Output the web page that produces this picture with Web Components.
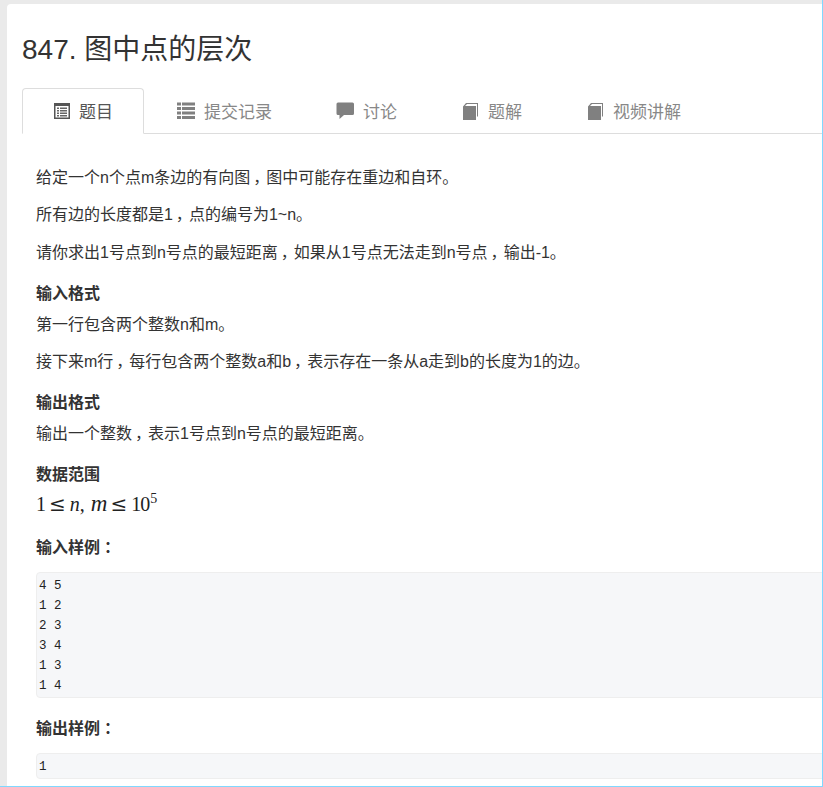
<!DOCTYPE html>
<html lang="zh">
<head>
<meta charset="utf-8">
<title>847. 图中点的层次</title>
<style>
  html, body { margin: 0; height: 787px; overflow: hidden; background: #e6e6e6; }
</style>
</head>
<body>
<problem-page>
  <h-title slot="title">847. 图中点的层次</h-title>
  <tab-bar slot="tabs">
    <tab-item active icon="list-alt">题目</tab-item>
    <tab-item icon="th-list">提交记录</tab-item>
    <tab-item icon="comment">讨论</tab-item>
    <tab-item icon="book">题解</tab-item>
    <tab-item icon="book">视频讲解</tab-item>
  </tab-bar>
  <text-para>给定一个n个点m条边的有向图<wide-mark>，</wide-mark>图中可能存在重边和自环。</text-para>
  <text-para>所有边的长度都是1<wide-mark>，</wide-mark>点的编号为1~n。</text-para>
  <text-para>请你求出1号点到n号点的最短距离<wide-mark>，</wide-mark>如果从1号点无法走到n号点<wide-mark>，</wide-mark>输出-1。</text-para>
  <sub-head>输入格式</sub-head>
  <text-para>第一行包含两个整数n和m。</text-para>
  <text-para>接下来m行<wide-mark>，</wide-mark>每行包含两个整数a和b<wide-mark>，</wide-mark>表示存在一条从a走到b的长度为1的边。</text-para>
  <sub-head>输出格式</sub-head>
  <text-para>输出一个整数<wide-mark>，</wide-mark>表示1号点到n号点的最短距离。</text-para>
  <sub-head>数据范围</sub-head>
  <math-line></math-line>
  <sub-head class="sample">输入样例<wide-mark>：</wide-mark></sub-head>
  <code-block>4 5
1 2
2 3
3 4
1 3
1 4</code-block>
  <sub-head class="sample">输出样例<wide-mark>：</wide-mark></sub-head>
  <code-block>1</code-block>
</problem-page>

<script>
const CJK = `"Liberation Sans", "Noto Sans CJK SC", sans-serif`;

class ProblemPage extends HTMLElement {
  constructor() {
    super();
    this.attachShadow({ mode: "open" });
    this.shadowRoot.innerHTML = /* html */`
    <style>
      :host {
        display: block;
        box-sizing: border-box;
        width: 823px;
        height: 787px;
        padding: 4px 0 0 7px;
        overflow: hidden;
        position: relative;
        font-family: ${CJK};
        color: #333;
      }
      :host::after {
        content: "";
        position: absolute;
        inset: 0;
        border-right: 1px solid #80d8ff;
        border-bottom: 1px solid #80d8ff;
        pointer-events: none;
      }
      .paper { position: absolute; inset: 0; width: 100%; height: 100%; }
      .card {
        position: relative;
        background: #fff;
        border-radius: 4px 0 0 0;
        height: 100%;
        width: 830px;
        box-sizing: border-box;
        padding: 28px 0 0 15px;
      }
      .body { padding: 32.5px 0 0 14px; }
    </style>
    <svg class="paper">
      <filter id="grain">
        <feTurbulence type="fractalNoise" baseFrequency="0.45" numOctaves="2" seed="4"/>
        <feColorMatrix values="0 0 0 0 0.82  0 0 0 0 0.82  0 0 0 0 0.82  0.5 0 0 0 0.55"/>
      </filter>
      <rect width="100%" height="100%" fill="#ececec"/>
      <rect width="100%" height="100%" filter="url(#grain)"/>
    </svg>
    <div class="card">
      <slot name="title"></slot>
      <slot name="tabs"></slot>
      <div class="body"><slot></slot></div>
    </div>`;
  }
}

class HTitle extends HTMLElement {
  constructor() {
    super();
    this.attachShadow({ mode: "open" });
    this.shadowRoot.innerHTML = `
    <style>
      :host { display: block; font-size: 28px; line-height: 36px; height: 56px; color: #333; }
    </style>
    <slot></slot>`;
  }
}

class TabBar extends HTMLElement {
  constructor() {
    super();
    this.attachShadow({ mode: "open" });
    this.shadowRoot.innerHTML = `
    <style>
      :host { display: flex; height: 46px; box-sizing: border-box; border-bottom: 1px solid #ddd; }
    </style>
    <slot></slot>`;
  }
}

const ICONS = {
  "list-alt": `<path fill="#555" fill-rule="evenodd" d="M0 0H16V16H0ZM1.500 3V14.500H14.500V3Z"/><path fill="#666" d="M3 4.500H5V6H3ZM6 4.500H13V6H6ZM3 7H5V8.500H3ZM6 7H13V8.500H6ZM3 9.500H5V11H3ZM6 9.500H13V11H6ZM3 12H5V13.500H3ZM6 12H13V13.500H6Z"/>`,
  "th-list": `<path d="M0 .5H4V3.500H0ZM5 .5H18V3.500H5ZM0 5H4V8H0ZM5 5H18V8H5ZM0 9.500H4V12.500H0ZM5 9.500H18V12.500H5ZM0 14H4V17H0ZM5 14H18V17H5Z"/>`,
  "comment": `<path d="M2 .5H16.500Q18 .5 18 2V11.500Q18 13 16.500 13H8L3.500 17V13H2Q.5 13 .5 11.500V2Q.5 .5 2 .5Z"/>`,
  "book": `<path d="M2 4.500L5 1H17V14.500H16V2H6L4 4H15V18H2Z"/>`
};

class TabItem extends HTMLElement {
  constructor() {
    super();
    this.attachShadow({ mode: "open" });
    const icon = this.getAttribute("icon");
    const size = icon === "list-alt" ? 16 : 18;
    this.shadowRoot.innerHTML = `
    <style>
      :host {
        display: flex;
        align-items: center;
        gap: 9px;
        box-sizing: border-box;
        height: 46px;
        padding: 0 30px;
        margin-right: 2px;
        font-size: 17px;
        color: #888;
        fill: #808080;
        border: 1px solid transparent;
      }
      :host([active]) {
        padding-left: 31px;
        color: #555;
        border-color: #ddd;
        border-bottom-color: #fff;
        border-radius: 4px 4px 0 0;
        background: #fff;
      }
      svg { width: ${size}px; height: ${size}px; flex: none; }
      slot { display: block; margin-bottom: 2px; }
    </style>
    <svg viewBox="0 0 ${size} ${size}">${ICONS[icon]}</svg>
    <slot></slot>`;
  }
}

class TextPara extends HTMLElement {
  constructor() {
    super();
    this.attachShadow({ mode: "open" });
    this.shadowRoot.innerHTML = `
    <style>
      :host { display: block; font-size: 16px; line-height: 22.5px; margin-bottom: 15px; white-space: nowrap; }
    </style>
    <slot></slot>`;
  }
}

// the narrow palt glyph is centred in a full em, the way the reference sets its punctuation
class WideMark extends HTMLElement {
  constructor() {
    super();
    this.attachShadow({ mode: "open" });
    this.shadowRoot.innerHTML = `
    <style>
      :host { display: inline-block; width: 1em; text-align: center; font-feature-settings: "palt"; }
    </style>
    <slot></slot>`;
  }
}

class SubHead extends HTMLElement {
  constructor() {
    super();
    this.attachShadow({ mode: "open" });
    this.shadowRoot.innerHTML = `
    <style>
      :host { display: block; font-size: 16px; line-height: 22.5px; font-weight: 700; margin-top: 18.5px; margin-bottom: 8.5px; }
      :host(.sample) { margin-top: 0; margin-bottom: 12.5px; }
    </style>
    <slot></slot>`;
  }
}

class MathLine extends HTMLElement {
  constructor() {
    super();
    this.attachShadow({ mode: "open" });
    this.shadowRoot.innerHTML = `
    <style>
      :host { display: flex; align-items: baseline; font-family: "Liberation Serif", serif; font-size: 20px; line-height: 24px; margin-top: -3.5px; margin-bottom: 21.5px; color: #222; white-space: nowrap; }
      i { font-style: italic; }
      .rel { font-family: "DejaVu Serif", serif; font-size: 20px; margin: 0 4px 0 3px; }
      .sep { margin-right: 6px; }
      .m { font-size: 23px; }
      .pow { letter-spacing: -1px; }
      sup { font-size: 14px; line-height: 0; vertical-align: 8px; margin-left: 1px; letter-spacing: 0; }
    </style>
    <span>1</span><span class="rel">≤</span><i>n</i><span class="sep">,</span><i class="m">m</i><span class="rel">≤</span><span class="pow">10<sup>5</sup></span>`;
  }
}

class CodeBlock extends HTMLElement {
  constructor() {
    super();
    this.attachShadow({ mode: "open" });
    const code = this.textContent;
    this.textContent = "";
    this.shadowRoot.innerHTML = `
    <style>
      :host {
        display: block;
        box-sizing: border-box;
        padding: 2.5px 2px 1px;
        border: 1px solid #eee;
        border-radius: 4px;
        background: #f6f7f9;
        margin-bottom: 20.5px;
      }
      pre {
        margin: 0;
        font-family: "Liberation Mono", "DejaVu Sans Mono", monospace;
        font-size: 12.5px;
        line-height: 20px;
        color: #222;
      }
    </style>
    <pre></pre>`;
    this.shadowRoot.querySelector("pre").textContent = code;
  }
}

customElements.define("problem-page", ProblemPage);
customElements.define("h-title", HTitle);
customElements.define("tab-bar", TabBar);
customElements.define("tab-item", TabItem);
customElements.define("text-para", TextPara);
customElements.define("wide-mark", WideMark);
customElements.define("sub-head", SubHead);
customElements.define("math-line", MathLine);
customElements.define("code-block", CodeBlock);
</script>
</body>
</html>
